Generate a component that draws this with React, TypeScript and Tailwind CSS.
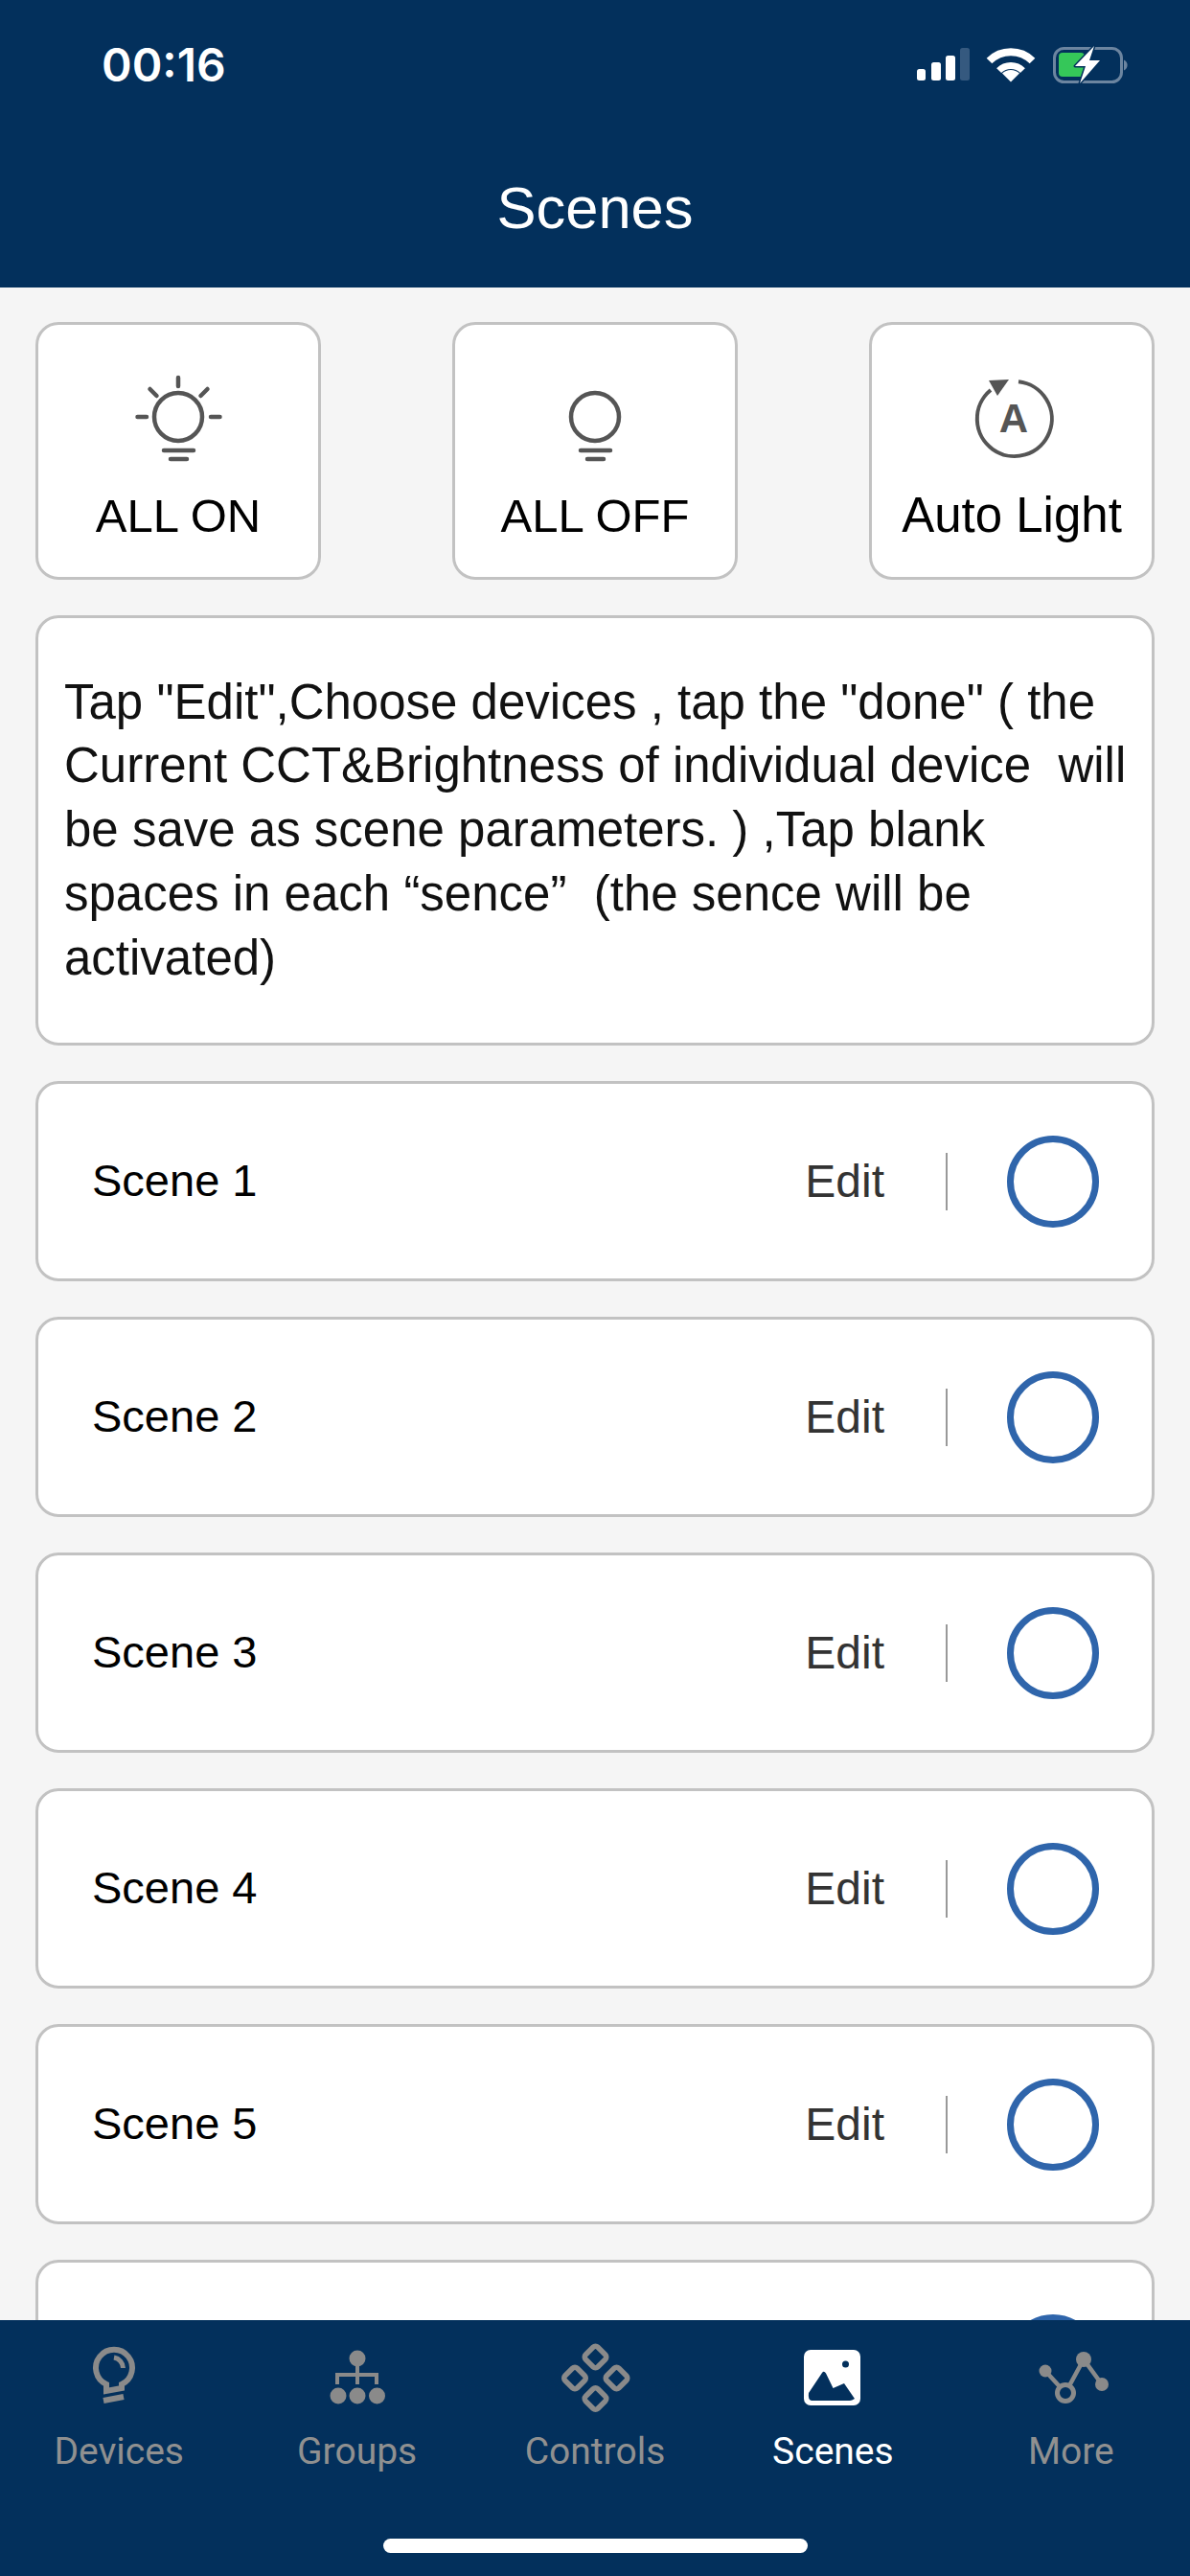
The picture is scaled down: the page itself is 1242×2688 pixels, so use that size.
const scenes = ['Scene 1', 'Scene 2', 'Scene 3', 'Scene 4', 'Scene 5', 'Scene 6']

const helpText = `Tap "Edit",Choose devices , tap the "done" ( the
Current CCT&Brightness of individual device  will
be save as scene parameters. ) ,Tap blank
spaces in each “sence”  (the sence will be
activated)`

function StatusIcons() {
  return (
    <svg width="240" height="56" viewBox="950 40 240 56" fill="none">
      <rect x="957" y="72" width="9" height="12" rx="2.5" fill="#fff" />
      <rect x="972" y="65" width="10" height="19" rx="2.5" fill="#fff" />
      <rect x="987" y="58" width="10" height="26" rx="2.5" fill="#fff" />
      <rect x="1002" y="50" width="10" height="34" rx="2.5" fill="#35597f" />
      <path d="M1032.5 63.5A32 32 0 0 1 1077.5 63.5" stroke="#fff" strokeWidth="8" />
      <path d="M1042.6 73.6A17.5 17.5 0 0 1 1067.4 73.6" stroke="#fff" strokeWidth="7" />
      <path d="M1055 85.5L1046 76.5A13 13 0 0 1 1064 76.5Z" fill="#fff" />
      <rect x="1100.5" y="50.5" width="70" height="35" rx="10" stroke="#6c85a0" strokeWidth="3" />
      <path d="M1173 62.5a6 6 0 0 1 0 11Z" fill="#6c85a0" />
      <rect x="1105" y="55" width="27" height="25" rx="4" fill="#35c759" />
      <path d="M1142 48L1122 69H1133L1127 87L1148 63H1137Z" fill="#fff" stroke="#03305c" strokeWidth="3" paintOrder="stroke" strokeLinejoin="round" />
    </svg>
  )
}

function SunIcon() {
  return (
    <svg width="100" height="100" viewBox="0 0 100 100" fill="none" stroke="#555" strokeWidth="4.5" strokeLinecap="round">
      <circle cx="50" cy="50" r="25" />
      <path d="M50 9V18M7.5 50H17M84 50H93.5M20.500 21L27.500 28M80.500 21L73.500 28" />
      <path d="M35 85H66M42 94H59" />
    </svg>
  )
}

function BulbIcon() {
  return (
    <svg width="100" height="100" viewBox="0 0 100 100" fill="none" stroke="#555" strokeWidth="4.5" strokeLinecap="round">
      <circle cx="50" cy="50" r="25" />
      <path d="M35 85H66M42 94H59" />
    </svg>
  )
}

function AutoIcon() {
  return (
    <svg width="110" height="110" viewBox="0 0 110 110" fill="none">
      <path d="M62 18.3A39 39 0 1 1 33 27" stroke="#555" strokeWidth="4" />
      <path d="M31 17L52 16L40 33Z" fill="#555" />
      <text x="57" y="71" textAnchor="middle" fontFamily="'Liberation Sans', sans-serif" fontWeight="700" fontSize="42" fill="#555">A</text>
    </svg>
  )
}

function DevicesIcon() {
  return (
    <svg width="80" height="80" viewBox="0 0 80 80" fill="none" stroke="#8a8a8a" strokeWidth="6">
      <path d="M27 55V48A19 19 0 1 1 43 48V52Z" />
      <path d="M24 65L45 61" />
      <path d="M35 20A11.5 11.5 0 0 1 44.5 31" strokeWidth="5" />
    </svg>
  )
}

function GroupsIcon() {
  return (
    <svg width="80" height="80" viewBox="0 0 80 80" fill="#8a8a8a">
      <circle cx="40" cy="21" r="8.5" />
      <circle cx="20" cy="60" r="8.5" />
      <circle cx="40" cy="60" r="8.5" />
      <circle cx="60.5" cy="60" r="8.5" />
      <path d="M40 21V48M19 48V38H60V48" fill="none" stroke="#8a8a8a" strokeWidth="4" />
    </svg>
  )
}

function ControlsIcon() {
  return (
    <svg width="100" height="80" viewBox="0 0 100 80" fill="none" stroke="#8a8a8a" strokeWidth="5.5">
      <rect x="41.5" y="10.5" width="18" height="18" rx="3.5" transform="rotate(45 50.5 19.5)" />
      <rect x="20" y="32.5" width="18" height="18" rx="3.5" transform="rotate(45 29 41.5)" />
      <rect x="63.5" y="32.500" width="18" height="18" rx="3.5" transform="rotate(45 72.5 41.5)" />
      <rect x="41.5" y="54" width="18" height="18" rx="3.5" transform="rotate(45 50.5 63)" />
    </svg>
  )
}

function ScenesIcon() {
  return (
    <svg width="80" height="80" viewBox="0 0 80 80">
      <rect x="10" y="12" width="59" height="58" rx="7" fill="#fff" />
      <circle cx="53.5" cy="27" r="3.5" fill="#03305c" />
      <path d="M15 57L29 36Q31 33.500 33 36.500L40.500 52L52 47L63 63Q60 65 58 65H18Q14 64 15 57Z" fill="#03305c" />
    </svg>
  )
}

function MoreIcon() {
  return (
    <svg width="110" height="80" viewBox="0 0 110 80" fill="#8a8a8a">
      <path d="M28 34L49 57L68 22L87 48" fill="none" stroke="#8a8a8a" strokeWidth="4.5" />
      <circle cx="28" cy="34" r="6.500" />
      <circle cx="68" cy="22" r="8" />
      <circle cx="87" cy="48" r="7" />
      <circle cx="49" cy="57" r="8.500" fill="#03305c" stroke="#8a8a8a" strokeWidth="5" />
    </svg>
  )
}

const tabs = [
  { label: 'Devices', icon: <DevicesIcon /> },
  { label: 'Groups', icon: <GroupsIcon /> },
  { label: 'Controls', icon: <ControlsIcon /> },
  { label: 'Scenes', icon: <ScenesIcon />, active: true },
  { label: 'More', icon: <MoreIcon /> },
]

function QuickButton({ label, icon, labelClass }: { label: string; icon: React.ReactNode; labelClass: string }) {
  return (
    <div className="w-[298px] h-[269px] bg-white border-[3px] border-[#c2c2c2] rounded-[24px] flex flex-col items-center pt-[41px]">
      <div className="h-[110px] flex items-center justify-center">{icon}</div>
      <span className={`mt-[18px] leading-[60px] text-black ${labelClass}`}>{label}</span>
    </div>
  )
}

function SceneRow({ name }: { name: string }) {
  return (
    <div className="shrink-0 h-[209px] bg-white border-[3px] border-[#c2c2c2] rounded-[24px] flex items-center pl-[56px] pr-[55px]">
      <span className="flex-1 text-[47px] text-black">{name}</span>
      <span className="text-[48px] text-[#333]">Edit</span>
      <div className="ml-[64px] w-[2px] h-[60px] bg-[#999]" />
      <div className="ml-[62px] w-[96px] h-[96px] rounded-full border-[7px] border-[#2f65ab]" />
    </div>
  )
}

export default function App() {
  return (
    <div className="w-[1242px] h-[2688px] flex flex-col bg-[#f5f5f5] overflow-hidden font-['Liberation_Sans',sans-serif]">
      <header className="shrink-0 h-[300px] bg-[#03305c] text-white">
        <div className="flex items-center justify-between pl-[106px] pr-[52px] pt-[40px] h-[96px]">
          <span className="text-[48px] font-semibold font-['Inter',sans-serif]">00:16</span>
          <StatusIcons />
        </div>
        <h1 className="mt-[89px] text-center text-[61.5px] leading-[64px]">Scenes</h1>
      </header>

      <main className="flex-1 min-h-0 overflow-hidden px-[37px] pt-[36px] flex flex-col gap-[37px]">
        <div className="shrink-0 flex justify-between">
          <QuickButton label="ALL ON" icon={<SunIcon />} labelClass="text-[49px]" />
          <QuickButton label="ALL OFF" icon={<BulbIcon />} labelClass="text-[49px]" />
          <QuickButton label="Auto Light" icon={<AutoIcon />} labelClass="text-[51px]" />
        </div>

        <div className="shrink-0 h-[449px] bg-white border-[3px] border-[#c2c2c2] rounded-[24px] flex items-center pl-[27px]">
          <p className="text-[51px] leading-[66.8px] text-[#111] whitespace-pre-wrap">{helpText}</p>
        </div>

        {scenes.map((name) => (
          <SceneRow key={name} name={name} />
        ))}
      </main>

      <nav className="shrink-0 h-[267px] bg-[#03305c]">
        <div className="grid grid-cols-5 h-[180px] pt-[19px] font-['Roboto',sans-serif]">
          {tabs.map((tab) => (
            <div key={tab.label} className="flex flex-col items-center">
              <div className="h-[80px] flex justify-center">{tab.icon}</div>
              <span className={`mt-[16px] text-[39px] leading-[44px] ${tab.active ? 'text-white' : 'text-[#909090]'}`}>{tab.label}</span>
            </div>
          ))}
        </div>
        <div className="mt-[48px] mx-auto w-[443px] h-[15px] rounded-full bg-white" />
      </nav>
    </div>
  )
}
